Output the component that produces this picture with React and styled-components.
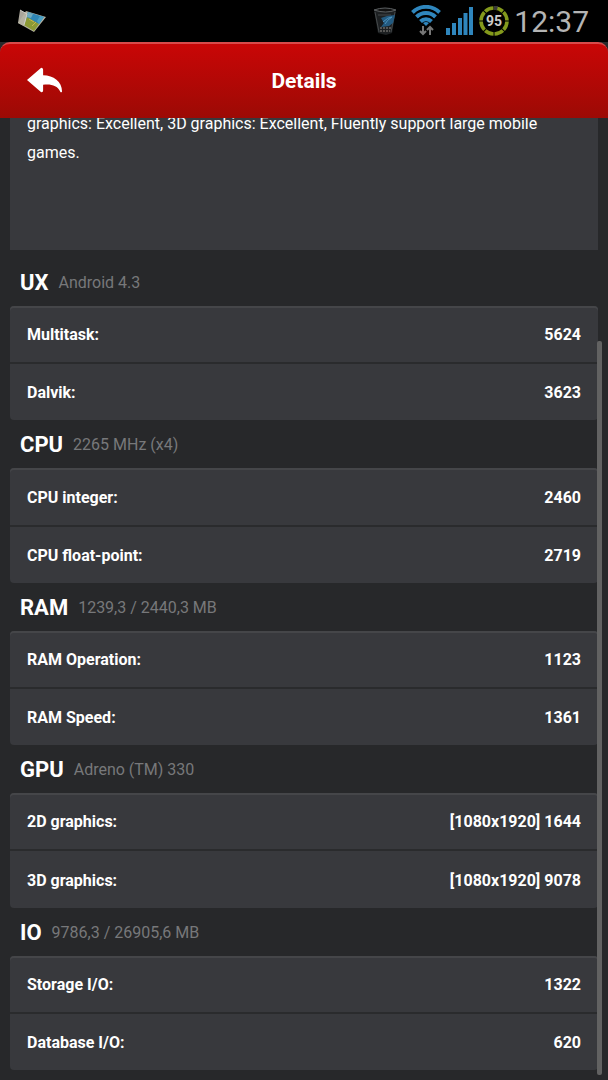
import React from "react";
import styled, { createGlobalStyle } from "styled-components";

const sections = [
  {
    name: "UX",
    info: "Android 4.3",
    rows: [
      ["Multitask:", "5624"],
      ["Dalvik:", "3623"],
    ],
  },
  {
    name: "CPU",
    info: "2265 MHz (x4)",
    rows: [
      ["CPU integer:", "2460"],
      ["CPU float-point:", "2719"],
    ],
  },
  {
    name: "RAM",
    info: "1239,3 / 2440,3 MB",
    rows: [
      ["RAM Operation:", "1123"],
      ["RAM Speed:", "1361"],
    ],
  },
  {
    name: "GPU",
    info: "Adreno (TM) 330",
    rows: [
      ["2D graphics:", "[1080x1920] 1644"],
      ["3D graphics:", "[1080x1920] 9078"],
    ],
  },
  {
    name: "IO",
    info: "9786,3 / 26905,6 MB",
    rows: [
      ["Storage I/O:", "1322"],
      ["Database I/O:", "620"],
    ],
  },
];

function MapIcon() {
  return (
    <svg width="30" height="24" viewBox="0 0 30 24" aria-hidden="true">
      <path d="M3 1l7 4-3 12-6-3z" fill="#aaa59a" />
      <path d="M9 2l20 6-12 15L1 14z" fill="#b5b2a2" />
      <path d="M11 3l16 5-5 7-13-5z" fill="#2f86b5" />
      <path d="M10 8l12 7-5 7-10-6z" fill="#8c9a35" />
      <path d="M11 3l5 2-2 4-4-1z" fill="#6fa9bd" />
      <path d="M23 7l4 1-5 7-2-3z" fill="#4aa0c4" />
      <path d="M12 10l5 3M15 17l4-4" stroke="#c9b64e" fill="none" />
      <path d="M3 1l7 4-3 11" stroke="#d0cfc8" fill="none" />
    </svg>
  );
}

function BinIcon() {
  return (
    <svg width="24" height="28" viewBox="0 0 24 28" aria-hidden="true">
      <path d="M1 3h22l-4 23-6 2-8-2z" fill="#1d2022" />
      <path d="M1 3q11-4 22 0-10 4-22 0z" fill="#111" stroke="#5c6062" />
      <path d="M2 5l4 20M22 5l-4 20M5 8h13" stroke="#45494b" fill="none" />
      <path d="M8 11l6-2 8-1-2 8-4 3-8 1 3-4z" fill="#235a80" />
      <path d="M10 15q5-5 9-5-5 3-7 7" stroke="#4d93bd" fill="none" />
      <path d="M7 21h11M7 24h10" stroke="#8f8a84" strokeDasharray="2 1" />
    </svg>
  );
}

function WifiIcon() {
  return (
    <svg width="30" height="32" viewBox="0 0 30 32" aria-hidden="true">
      <g fill="none" stroke="#2f86bd" strokeWidth="4">
        <path d="M1.5 7.5a19 19 0 0 1 27 0" />
        <path d="M5.5 12a13.4 13.4 0 0 1 19 0" />
        <path d="M9.5 16.5a7.8 7.8 0 0 1 11 0" />
      </g>
      <g fill="none" stroke="#000">
        <path d="M3 9.500a17 17 0 0 1 24 0" />
        <path d="M7 14a11.4 11.4 0 0 1 16 0" />
      </g>
      <path d="M12 18q3-2 6 0l-3 3z" fill="#2f86bd" />
      <path
        d="M12 21v8M9 26l3 3 3-3M19 30v-8M16 25l3-3 3 3"
        fill="none"
        stroke="#777"
        strokeWidth="2"
      />
    </svg>
  );
}

function SignalIcon() {
  return (
    <svg width="28" height="28" viewBox="0 0 28 28" fill="#2f86bd" aria-hidden="true">
      <path d="M0 21h4v7H0zM6 16h4v12H6zM12 11h4v17h-4zM17.5 6h4v22h-4zM23 0h4v28h-4z" />
    </svg>
  );
}

function BatteryIcon() {
  return (
    <svg width="30" height="30" viewBox="0 0 30 30" role="img" aria-label="Battery 95">
      <circle
        cx="15"
        cy="15"
        r="13"
        fill="none"
        stroke="#849a1c"
        strokeWidth="3.6"
        pathLength="80"
        strokeDasharray="9 1"
        transform="rotate(-88 15 15)"
      />
      <path d="M15 0h4l-1 4h-3z" fill="#3a3a3a" />
      <BatteryText x="15" y="20">
        95
      </BatteryText>
    </svg>
  );
}

function App() {
  return (
    <Screen>
      <GlobalStyle />
      <StatusBar>
        <MapIcon />
        <StatusIcons>
          <Tray>
            <BinIcon />
          </Tray>
          <WifiIcon />
          <SignalIcon />
          <BatteryIcon />
          <Clock>12:37</Clock>
        </StatusIcons>
      </StatusBar>
      <Header>
        <BackButton aria-label="Back">
          <svg width="38" height="28" viewBox="0 0 38 28" aria-hidden="true">
            <path
              d="M0 13L15 0q2 0 2 2v6c11 0 20 7 20 17q-1 2-2 0c-3-6-9-8-18-7v6q0 2-2 2z"
              fill="#fff"
            />
          </svg>
        </BackButton>
        <Title>Details</Title>
      </Header>
      <Content>
        <Summary>
          <SummaryText>
            graphics: Excellent, 3D graphics: Excellent, Fluently support large
            mobile games.
          </SummaryText>
        </Summary>
        {sections.map((section) => (
          <Section key={section.name}>
            <SectionHead>
              <SectionName>{section.name}</SectionName>
              <SectionInfo>{section.info}</SectionInfo>
            </SectionHead>
            <Card>
              {section.rows.map(([label, value]) => (
                <Row key={label}>
                  <dt>{label}</dt>
                  <Value>{value}</Value>
                </Row>
              ))}
            </Card>
          </Section>
        ))}
        <ScrollThumb />
      </Content>
    </Screen>
  );
}

export default App;

const GlobalStyle = createGlobalStyle`
  * {
    box-sizing: border-box;
  }
  body {
    margin: 0;
    background: #27282a;
    font-family: Roboto, "Liberation Sans", sans-serif;
    color: #fff;
  }
`;

const Screen = styled.div`
  min-height: 100vh;
  display: flex;
  flex-direction: column;
`;

const StatusBar = styled.div`
  height: 42px;
  padding: 0 19px 0 17px;
  display: flex;
  align-items: center;
  justify-content: space-between;
  background: #000;
`;

const StatusIcons = styled.div`
  display: flex;
  align-items: center;
  gap: 5px;
`;

const Tray = styled.div`
  display: flex;
  margin-right: 9px;
`;

const Clock = styled.time`
  font-size: 30px;
  line-height: 40px;
  padding-top: 2px;
  color: #b4b4b4;
`;

const BatteryText = styled.text`
  font-size: 14px;
  font-weight: bold;
  text-anchor: middle;
  fill: #ccc;
`;

const Header = styled.header`
  height: 76px;
  padding: 0 20px;
  display: grid;
  grid-template-columns: 50px 1fr 50px;
  align-items: center;
  background: linear-gradient(#c90606, #9c0a05);
  border-top: 2px solid #d84a4a;
  border-radius: 10px 10px 0 0;
`;

const BackButton = styled.button`
  padding: 0 7px;
  display: flex;
  border: 0;
  background: none;
  cursor: pointer;
`;

const Title = styled.h1`
  margin: 0;
  font-size: 21px;
  line-height: 28px;
  font-weight: bold;
  text-align: center;
`;

const Content = styled.main`
  position: relative;
  flex: 1;
  display: flex;
  flex-direction: column;
  padding: 0 10px 10px;
`;

/* scrolled part way, so the text runs in under the header */
const Summary = styled.div`
  height: 132px;
  margin-bottom: 8px;
  padding: 0 17px 83px;
  display: flex;
  flex-direction: column;
  justify-content: flex-end;
  overflow: hidden;
  background: #38393d;
`;

const SummaryText = styled.p`
  margin: 0;
  font-size: 16px;
  line-height: 29px;
`;

const Section = styled.section`
  flex: 1;
  display: flex;
  flex-direction: column;
`;

const SectionHead = styled.div`
  height: 48px;
  padding: 2px 10px 0;
  display: flex;
  align-items: center;
  gap: 10px;
`;

const SectionName = styled.h2`
  margin: 0;
  font-size: 22px;
  line-height: 28px;
  font-weight: bold;
`;

const SectionInfo = styled.span`
  font-size: 16px;
  line-height: 28px;
  color: #77787a;
`;

const Card = styled.dl`
  flex: 1;
  margin: 0;
  display: flex;
  flex-direction: column;
  background: #38393d;
  box-shadow: inset 0 2px #454649;
  border-radius: 4px;
`;

const Row = styled.div`
  flex: 1;
  padding: 2px 17px 0;
  display: flex;
  align-items: center;
  justify-content: space-between;
  font-size: 16px;
  line-height: 24px;
  font-weight: bold;

  & + & {
    border-top: 2px solid #2a2b2d;
  }
`;

const Value = styled.dd`
  margin: 0;
`;

const ScrollThumb = styled.div`
  position: absolute;
  top: 223px;
  right: 6px;
  bottom: 5px;
  width: 5px;
  border-radius: 2px;
  background: #626262;
`;
